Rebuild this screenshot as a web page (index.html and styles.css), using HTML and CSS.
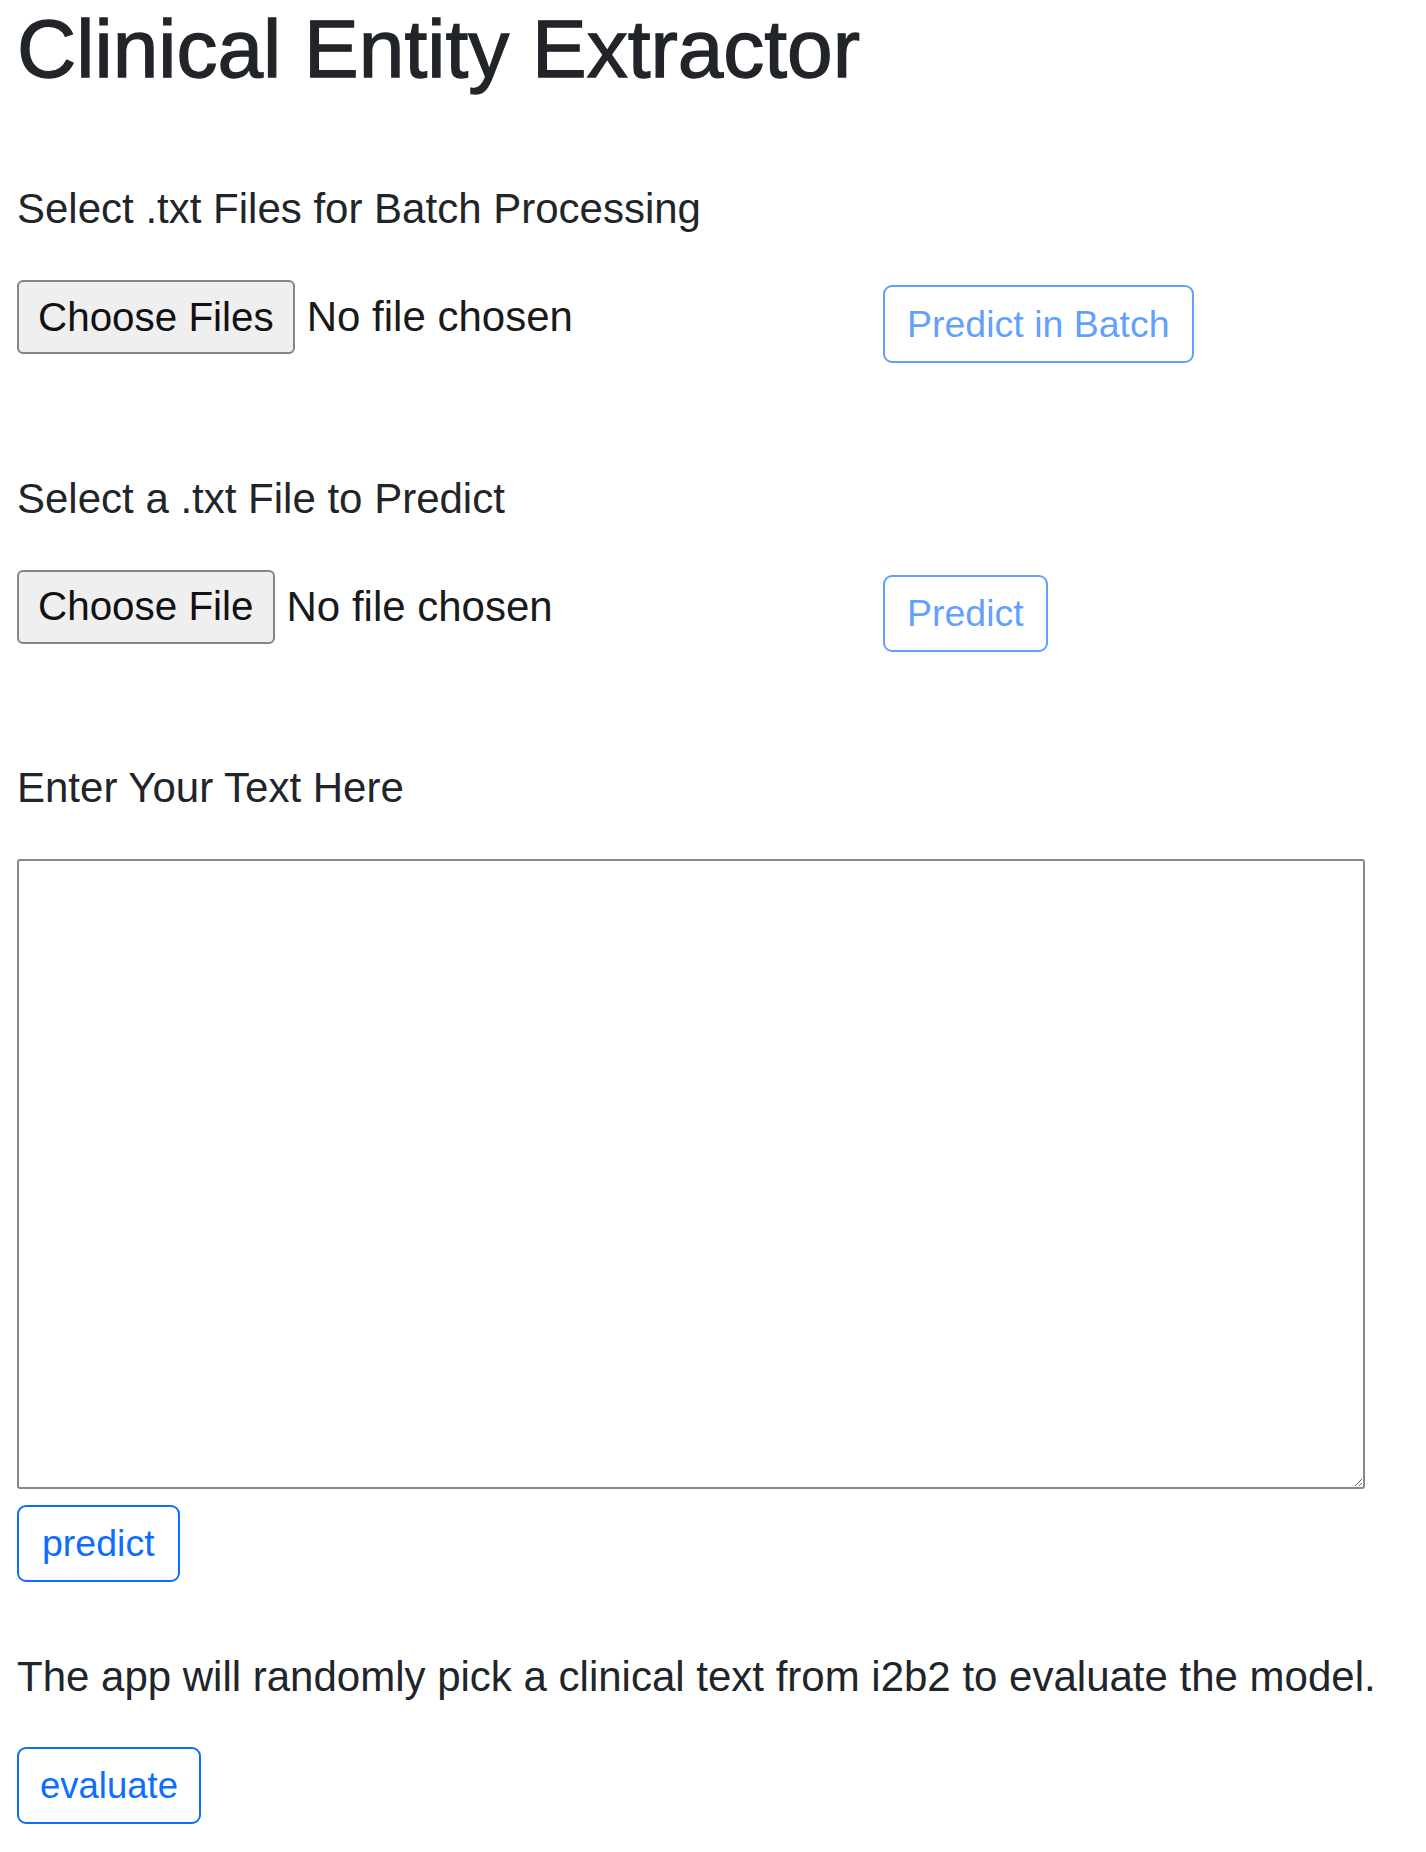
FILE: index.html
```html
<!DOCTYPE html>
<html lang="en">
<head>
<meta charset="utf-8">
<title>Clinical Entity Extractor</title>
<link rel="stylesheet" href="styles.css">
</head>
<body>
<main class="page">
  <h1 class="title">Clinical Entity Extractor</h1>

  <section class="block block-batch">
    <label class="label" for="batch-files">Select .txt Files for Batch Processing</label>
    <div class="row">
      <div class="file">
        <input class="file-input" type="file" id="batch-files" multiple accept=".txt">
        <span class="file-btn">Choose Files</span>
        <span class="file-status">No file chosen</span>
      </div>
      <div class="row-action">
        <button class="btn btn-outline is-disabled" type="button" disabled>Predict in Batch</button>
      </div>
    </div>
  </section>

  <section class="block block-single">
    <label class="label" for="single-file">Select a .txt File to Predict</label>
    <div class="row">
      <div class="file">
        <input class="file-input" type="file" id="single-file" accept=".txt">
        <span class="file-btn">Choose File</span>
        <span class="file-status">No file chosen</span>
      </div>
      <div class="row-action">
        <button class="btn btn-outline is-disabled" type="button" disabled>Predict</button>
      </div>
    </div>
  </section>

  <section class="block block-text">
    <label class="label" for="text-input">Enter Your Text Here</label>
    <textarea class="text-area" id="text-input"></textarea>
    <div class="text-action">
      <button class="btn btn-outline btn-predict" type="button">predict</button>
    </div>
  </section>

  <section class="block block-eval">
    <p class="note">The app will randomly pick a clinical text from i2b2 to evaluate the model.</p>
    <button class="btn btn-outline btn-eval" type="button">evaluate</button>
  </section>
</main>
</body>
</html>
```

FILE: styles.css
```css
* {
  box-sizing: border-box;
}

html, body {
  margin: 0;
  padding: 0;
  background: #ffffff;
}

body {
  font-family: "Liberation Sans", Arial, Helvetica, sans-serif;
  color: #212529;
}

.page {
  padding: 0 17px;
  display: flex;
  flex-direction: column;
}

.title {
  margin: 0;
  font-size: 82px;
  line-height: 1.2;
  font-weight: 400;
  -webkit-text-stroke: 1.3px #212529;
  letter-spacing: 0;
}

.block {
  display: flex;
  flex-direction: column;
}

.block-batch {
  margin-top: 79px;
}

.block-single {
  margin-top: 104px;
}

.block-text {
  margin-top: 104px;
}

.block-eval {
  margin-top: 63px;
}

.label {
  display: block;
  font-size: 42px;
  line-height: 1.5;
  margin: 0 0 40px 0;
}

.row {
  display: grid;
  grid-template-columns: 866px auto;
  align-items: start;
}

.file {
  position: relative;
  display: flex;
  align-items: center;
  gap: 12px;
}

.file-input {
  position: absolute;
  width: 1px;
  height: 1px;
  opacity: 0;
  overflow: hidden;
  pointer-events: none;
}

.file-btn {
  display: inline-flex;
  align-items: center;
  height: 74px;
  padding: 0 19px;
  background: #efefef;
  border: 2px solid #858585;
  border-radius: 6px;
  font-size: 40.4px;
  color: #111111;
}

.file-status {
  font-size: 42px;
  color: #1a1a1a;
}

.row-action {
  margin-top: 5px;
  display: flex;
}

.btn {
  font-family: "Liberation Sans", Arial, Helvetica, sans-serif;
  font-size: 37.5px;
  line-height: 1.5;
  padding: 8.5px 22px;
  border: 2px solid #0d6efd;
  border-radius: 9px;
  background: #ffffff;
  color: #0d6efd;
  cursor: pointer;
}

.btn.is-disabled {
  opacity: 0.65;
  cursor: default;
}

.btn-predict {
  padding-left: 23px;
  padding-right: 23px;
}

.btn-eval {
  padding-left: 21px;
  padding-right: 21px;
  font-size: 36.5px;
  line-height: 1.54;
}

.text-area {
  display: block;
  width: 1348px;
  height: 630px;
  border: 2px solid #888888;
  border-radius: 3px;
  padding: 6px;
  font-family: "Liberation Sans", Arial, sans-serif;
  font-size: 37px;
  resize: both;
}

.text-action {
  margin-top: 16px;
  display: flex;
}

.note {
  margin: 0 0 39px 0;
  font-size: 42px;
  line-height: 1.5;
}

.block-eval .btn {
  align-self: flex-start;
}
```
